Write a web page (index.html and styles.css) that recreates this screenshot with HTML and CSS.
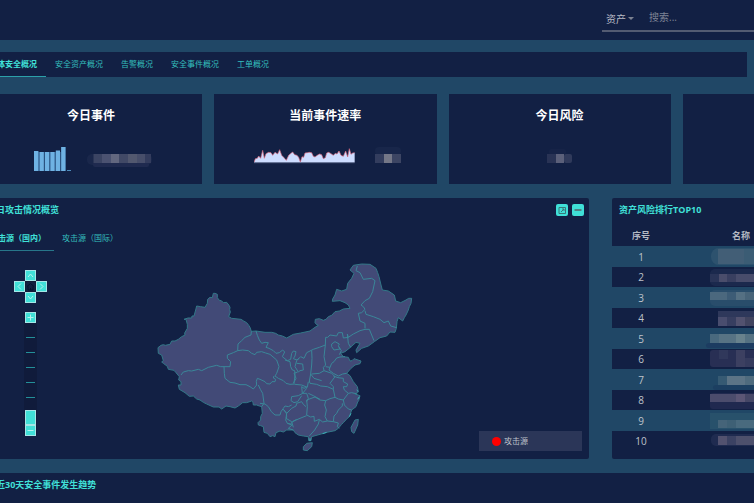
FILE: index.html
```html
<!DOCTYPE html>
<html lang="zh-CN">
<head>
<meta charset="utf-8">
<title>安全概况</title>
<link rel="stylesheet" href="styles.css">
</head>
<body>
<div class="shell">
  <header class="topbar">
    <form class="search">
      <select class="search-type" aria-label="资产"><option>资产</option></select>
      <span class="caret"></span>
      <input class="search-input" type="text" placeholder="搜索..." aria-label="搜索">
    </form>
  </header>

  <main>
    <nav class="tabs main-tabs">
      <a class="tab active" href="#">总体安全概况</a>
      <a class="tab" href="#">安全资产概况</a>
      <a class="tab" href="#">告警概况</a>
      <a class="tab" href="#">安全事件概况</a>
      <a class="tab" href="#">工单概况</a>
    </nav>

    <section class="stats">
      <article class="stat">
        <h2>今日事件</h2>
        <div class="stat-body">
          <svg width="42" height="26" viewBox="-4 0 42 26">
            <g fill="#2a5280"><rect y="6" width="32" height="19"/><rect x="27" y="1" width="5" height="24"/></g>
            <g fill="#6fb2e3"><rect y="5" width="4.400" height="20"/><rect x="5.600" y="6" width="4.200" height="19"/><rect x="11" y="6" width="4.200" height="19"/><rect x="16.400" y="6" width="4.200" height="19"/><rect x="21.800" y="4.500" width="4.200" height="20.500"/><rect x="27.200" y="1" width="4.200" height="24"/></g>
            <rect x="33" y="24" width="4" height="1" fill="#4f8cbc"/>
          </svg>
          <svg class="bars-value" width="66" height="18" viewBox="0 -4 66 18">
            <rect width="65" height="11" rx="5" fill="#1a274b"/><rect x="6" y="8" width="56" height="5" rx="2" fill="#1f2a4f"/>
            <rect x="6.500" width="9" height="9" fill="#3b4463"/><rect x="15" width="9" height="9" fill="#4b5271"/><rect x="24" width="9" height="9" fill="#62677f"/><rect x="32" width="9" height="9" fill="#414966"/><rect x="41" width="9" height="9" fill="#52586f"/><rect x="50" width="8" height="9" fill="#474e6a"/><rect x="58" width="6" height="9" fill="#333c5d"/>
          </svg>
        </div>
      </article>
      <article class="stat">
        <h2>当前事件速率</h2>
        <div class="stat-body rate">
          <svg width="102" height="26" viewBox="150 168 306 78">
            <path fill="#cddcff" d="M150 217L154 206 160 205 164 198 170 205 176 181 181 205 186 191 194 187 201 188 206 196 213 187 221 192 227 179 233 196 239 202 247 211 254 196 261 190 266 186 272 194 279 196 284 202 289 216 294 200 299 202 303 189 310 188 316 187 323 188 328 199 333 201 341 195 347 192 353 194 358 206 364 203 368 189 374 187 381 191 388 196 394 190 399 192 405 183 411 196 418 199 425 183 431 201 436 176 441 193 446 189 452 188V217Z"/>
            <path fill="none" stroke="#d9687c" stroke-width="2" d="M150 217L154 206 160 205 164 198 170 205 176 181 181 205 186 191 194 187 201 188 206 196 213 187 221 192 227 179 233 196 239 202 247 211 254 196 261 190 266 186 272 194 279 196 284 202 289 216 294 200 299 202 303 189 310 188 316 187 323 188 328 199 333 201 341 195 347 192 353 194 358 206 364 203 368 189 374 187 381 191 388 196 394 190 399 192 405 183 411 196 418 199 425 183 431 201 436 176 441 193 446 189 452 188"/>
            <path stroke="#8995b6" stroke-width="2" d="M150 218H452"/>
          </svg>
          <svg class="rate-value" width="26" height="24" viewBox="0 0 26 24">
            <rect width="26" height="8" rx="4" fill="#18264a"/><rect y="7" width="9" height="9" fill="#333d5e"/><rect x="9" y="7" width="8" height="9" fill="#747787"/><rect x="17" y="7" width="9" height="9" fill="#3c4563"/>
          </svg>
        </div>
      </article>
      <article class="stat">
        <h2>今日风险</h2>
        <div class="stat-body">
          <svg width="25" height="20" viewBox="0 0 25 20">
            <rect x="2" width="17" height="6" rx="2" fill="#162347"/><rect y="5" width="9" height="9" fill="#293355"/><rect x="9" y="5" width="8" height="9" fill="#5b607a"/><rect x="17" y="5" width="8" height="9" rx="2" fill="#303a5b"/>
          </svg>
        </div>
      </article>
      <article class="stat"></article>
    </section>

    <section class="panels">
      <article class="panel attack">
        <div class="panel-head">
          <h3>今日攻击情况概览</h3>
          <div class="tools">
            <button type="button" aria-label="放大"><svg width="12" height="12" viewBox="0 0 12 12" fill="none" stroke="#397879"><path d="M3 3.500H9.500V9.500H3Z M5 8L8 5 M6 5H8V7"/></svg></button>
            <button type="button" aria-label="收起"><svg width="12" height="12" viewBox="0 0 12 12"><path d="M2.500 6H9.500" stroke="#546369" stroke-width="1.500"/></svg></button>
          </div>
        </div>
        <nav class="tabs sub-tabs">
          <a class="tab active" href="#">攻击源（国内）</a>
          <a class="tab" href="#">攻击源（国际）</a>
        </nav>
        <div class="map-area">
          <div class="controls">
            <div class="pan">
              <button class="up" type="button" aria-label="上移"><svg viewBox="0 0 9 9"><path d="M2 6L4.500 3 7 6"/></svg></button>
              <button class="left" type="button" aria-label="左移"><svg viewBox="0 0 9 9"><path d="M6 1.500L3 4.500 6 7.500"/></svg></button>
              <button class="home" type="button" aria-label="复位"><svg viewBox="0 0 9 9"><path d="M1 4.500L4.500 1.500 8 4.500M2 4.500V8H7V4.500M4.500 8V6"/></svg></button>
              <button class="right" type="button" aria-label="右移"><svg viewBox="0 0 9 9"><path d="M3 1.500L6 4.500 3 7.500"/></svg></button>
              <button class="down" type="button" aria-label="下移"><svg viewBox="0 0 9 9"><path d="M2 3L4.500 6 7 3"/></svg></button>
            </div>
            <div class="zoom">
              <button type="button" aria-label="放大地图"><svg viewBox="0 0 9 9"><path d="M4.500 1.500V7.500M1.500 4.500H7.500"/></svg></button>
              <input class="zoom-range" type="range" min="0" max="6" value="0" aria-label="缩放">
              <button type="button" aria-label="缩小地图"><svg viewBox="0 0 9 9"><path d="M1.500 4.500H7.500"/></svg></button>
            </div>
          </div>
          <svg class="map" viewBox="0 0 810 627">
            <g fill="#424a77" stroke="#327888" stroke-width="3" stroke-linejoin="round">
              <path d="M195 130L202 133 202 143 208 151 213 152 221 158 230 157 237 166 240 172 239 179 241 186 236 200 245 205 255 206 273 208 281 213 290 218 297 227 300 232 304 244 318 243 345 247 365 247 377 250 385 255 397 258 410 264 430 253 452 249 480 243 488 237 495 232 505 226 500 224 495 218 496 208 508 206 520 211 528 208 535 200 545 196 555 185 568 183 580 177 600 175 595 165 585 158 570 152 547 154 548 147 555 135 560 118 575 123 590 118 593 100 605 85 612 70 600 60 610 46 635 42 660 43 678 55 683 68 687 80 693 105 697 120 715 123 733 135 737 153 752 158 768 150 776 145 785 145 783 160 778 170 775 180 768 195 763 203 758 213 745 203 741 215 739 235 735 247 720 246 710 258 690 263 673 275 655 288 635 295 620 308 618 300 630 280 618 277 600 293 585 305 572 310 580 320 595 322 600 333 606 332 612 326 633 333 630 341 615 345 603 355 590 370 600 377 610 395 622 410 625 425 615 432 630 437 626 452 623 456 618 470 605 480 598 500 591 506 580 518 574 524 565 535 555 542 530 547 510 553 485 560 483 572 476 572 475 560 460 558 445 555 435 548 430 540 410 540 400 546 390 543 378 548 375 560 368 557 360 560 352 550 342 547 340 530 332 527 325 525 324 518 332 510 332 500 337 490 335 470 328 468 320 465 310 465 309 457 305 453 290 458 278 458 265 468 255 474 240 470 228 468 215 477 207 471 190 471 170 462 160 457 150 450 140 447 130 438 118 439 105 428 88 418 85 405 93 405 93 395 86 390 88 380 78 368 72 361 55 358 52 349 40 340 35 336 40 332 35 315 25 310 24 293 33 286 40 284 46 286 60 283 65 273 75 273 85 268 95 260 105 255 104 249 112 235 112 223 108 208 102 208 114 204 125 204 126 198 132 198 137 180 140 168 152 170 165 172 172 160 173 148 180 142 187 143 190 130Z"/>
              <path d="M605 545L603 532 607 525 615 510 625 508 623 525 612 550ZM460 590L470 580 487 578 485 590 472 602 460 600Z"/>
            </g>
            <g fill="none" stroke="#3a8799" stroke-width="3" stroke-linejoin="round">
              <path d="M93 375L100 366 115 362 125 363 145 358 155 362 175 352 200 346 212 350 225 350 240 350 242 335 232 325 232 315 250 308 263 302M263 302L264 282 275 272 285 262 303 255 304 244M263 302L278 300 295 302 305 310 315 314 320 307 335 305 347 309 360 313 380 330 387 350 380 370 375 378 385 385M318 243L322 256 328 270 335 280 345 277 355 278 348 292 357 295 370 302 378 310 388 308 398 300 404 306 397 320 412 332 422 328 425 310 430 303 438 305 435 318 430 326 441 330 447 325M222 350L223 370 225 385 240 397 255 399 270 404 288 404 300 410 310 417 320 405 319 394 322 385 330 388 345 395 350 401 360 402 366 395 375 395 377 388 370 384 372 378M325 405L331 418 338 430 342 460 335 470M385 385L400 392 408 400 420 403 435 402M405 330L420 335 422 350 427 360 434 362 435 376 432 400M330 460L345 462 355 470 364 485 375 495 390 495 393 485 400 475 405 468 415 470 425 465M400 478L409 489 410 500 407 510 412 520 422 522 428 515 440 508M412 520L426 525 415 535 430 540"/>
              <g transform="translate(390)">
                <path d="M232 48L228 62 240 68 250 88 275 85 285 92 278 125 268 145 255 152 243 165 250 170 255 178 245 188 235 190 240 213 255 220 255 235M255 182L258 193 280 200 300 208 312 218 325 213 332 228 350 233M255 238L268 238 275 255 282 272M255 238L240 242 220 252 205 262 202 252 205 280 212 292M205 262L190 264 187 248 175 248 170 258 150 255 143 262 137 262 136 285 118 292 100 298 80 308 72 325 62 320 50 332M95 302L96 325 95 345 92 372M136 285L132 320 137 345 130 352 132 362 118 370 95 372M50 332L45 350 55 366 60 362 70 360 68 342 50 340M155 282L165 275 178 282 175 287 180 297 162 300 155 290ZM176 290L184 302 178 314M195 320L180 321 170 324 162 335 155 340 150 352 137 350M150 352L147 360 160 370 175 378 188 372 200 370M132 362L155 370 165 380 150 400 160 410 160 418 142 410 122 408 110 403 90 400 88 393 92 372M92 372L102 385 125 392M160 378L174 383 190 385 190 395 203 402 200 410 190 410 193 420 205 430 190 450 175 447 165 442 160 418M205 430L215 428 232 432M190 450L193 465 205 477 215 480M137 452L150 446 165 442M187 460L187 468 175 480 170 490 162 498 160 515 142 513 135 500 139 480 134 465 137 452M80 450L105 441 120 450 137 452M80 450L82 470 80 495 92 501 102 499 103 514 118 508 128 516 142 513M118 510L115 522 104 540 88 558M160 515L175 519 172 530 178 535M37 515L60 505 80 497M10 478L20 490 35 475 48 468 50 460 65 455 70 463 78 470M20 490L18 505 35 515 40 532M85 395L82 411 72 415 65 410 67 430 80 430 85 445 80 455M80 415L68 430 55 437 35 440 33 452 42 458 53 455 65 437M45 403L65 405 82 412M85 430L100 437 120 448M40 400L48 385 42 370 53 366"/>
              </g>
              <path d="M620 420l5 5M628 440l-5 8M603 490l-5 10M530 547l-12 4M480 565v8" stroke="#3daeb8"/>
            </g>
          </svg>
          <div class="legend"><span class="dot"></span>攻击源</div>
        </div>
      </article>

      <article class="panel ranking">
        <div class="panel-head"><h3>资产风险排行TOP10</h3></div>
        <table>
          <thead><tr><th class="rank">序号</th><th class="name">名称</th></tr></thead>
          <tbody>
            <tr><td>1</td><td><svg class="mosaic" viewBox="0 0 60 20"><rect x="7" y="1" width="60" height="17" rx="8" fill="#2d526e"/><rect x="14" y="2" width="26" height="15" fill="#425e76"/><rect x="40" y="2" width="20" height="15" fill="#3b5c74"/></svg></td></tr>
            <tr><td>2</td><td><svg class="mosaic" viewBox="0 0 60 20"><rect x="6" y="2" width="60" height="17" rx="5" fill="#1b294d"/><rect x="6" y="7" width="9" height="8" fill="#293457"/><rect x="15" y="7" width="8" height="8" fill="#4a4d6b"/><rect x="23" y="7" width="9" height="8" fill="#393f60"/><rect x="32" y="7" width="18" height="8" fill="#484c6b"/></svg></td></tr>
            <tr><td>3</td><td><svg class="mosaic" viewBox="0 0 60 20"><rect x="6" y="2" width="60" height="16" rx="5" fill="#294d6b"/><rect x="6" y="4" width="17" height="8" fill="#4b687e"/><rect x="23" y="4" width="9" height="8" fill="#3d5c76"/><rect x="32" y="4" width="9" height="8" fill="#557083"/><rect x="41" y="4" width="9" height="8" fill="#486479"/></svg></td></tr>
            <tr><td>4</td><td><svg class="mosaic" viewBox="0 0 60 20"><rect x="14" y="3" width="60" height="15" fill="#2e385b"/><rect x="14" y="9" width="9" height="9" fill="#494d6e"/><rect x="23" y="9" width="9" height="9" fill="#373e60"/><rect x="32" y="9" width="9" height="9" fill="#52526f"/><rect x="41" y="9" width="9" height="9" fill="#41445f"/></svg></td></tr>
            <tr><td>5</td><td><svg class="mosaic" viewBox="0 0 60 20"><rect x="2" y="14" width="60" height="5" rx="3" fill="#1c3c61"/><rect x="6" y="5" width="9" height="9" fill="#49697e"/><rect x="15" y="5" width="17" height="9" fill="#577384"/><rect x="32" y="5" width="9" height="9" fill="#68828d"/><rect x="41" y="5" width="9" height="9" fill="#557283"/></svg></td></tr>
            <tr><td>6</td><td><svg class="mosaic" viewBox="0 0 60 20"><rect x="6" y="1" width="60" height="17" rx="3" fill="#282f54"/><rect x="15" y="1" width="9" height="9" fill="#30385b"/><rect x="32" y="1" width="9" height="17" fill="#3c4061"/><rect x="41" y="9" width="9" height="9" fill="#353b5d"/></svg></td></tr>
            <tr><td>7</td><td><svg class="mosaic" viewBox="0 0 60 20"><rect x="9" y="15" width="60" height="5" rx="3" fill="#1c3f61"/><rect x="14" y="6" width="9" height="9" fill="#365a73"/><rect x="23" y="6" width="18" height="9" fill="#5c7486"/><rect x="41" y="6" width="9" height="9" fill="#4f6b7e"/></svg></td></tr>
            <tr><td>8</td><td><svg class="mosaic" viewBox="0 0 60 20"><rect x="6" y="3" width="60" height="16" rx="3" fill="#20294f"/><rect x="6" y="4" width="26" height="8" fill="#4b4c6c"/><rect x="32" y="4" width="9" height="8" fill="#5b5675"/><rect x="41" y="4" width="9" height="8" fill="#454766"/></svg></td></tr>
            <tr><td>9</td><td><svg class="mosaic" viewBox="0 0 60 20"><rect x="6" y="2" width="60" height="16" fill="#28516b"/><rect x="14" y="9" width="9" height="8" fill="#456479"/><rect x="23" y="9" width="9" height="8" fill="#3e6075"/><rect x="32" y="9" width="18" height="8" fill="#496a7e"/></svg></td></tr>
            <tr><td>10</td><td><svg class="mosaic" viewBox="0 0 60 20"><rect x="7" y="3" width="60" height="12" rx="5" fill="#1f2b50"/><rect x="14" y="5" width="9" height="9" fill="#52526f"/><rect x="23" y="5" width="9" height="9" fill="#3b4263"/><rect x="32" y="5" width="18" height="9" fill="#4d506c"/></svg></td></tr>
          </tbody>
        </table>
      </article>
    </section>

    <section class="panel trend"><div class="panel-head"><h3>最近30天安全事件发生趋势</h3></div></section>
  </main>
</div>
</body>
</html>
```
FILE: styles.css
```css
* { box-sizing: border-box; }
:root {
  --navy: #122044;
  --page: #204766;
  --teal: #40e0d8;
}
html { background: var(--page); }
body {
  margin: 0;
  min-height: 100vh;
  overflow: hidden;
  color: #bfc3cb;
  font: 8px/12px "Open Sans", "Noto Sans CJK SC", sans-serif;
}
h2, h3 { margin: 0; }
button { padding: 0; border: 0; cursor: pointer; }

/* The dashboard is wider than the window and scrolled slightly to the right. */
.shell { width: calc(100% + 171px); margin-left: -20px; }

.topbar {
  display: flex;
  justify-content: flex-end;
  height: 40px;
  background: var(--navy);
}
.search {
  display: flex;
  align-items: center;
  width: 303px;
  height: 32px;
  padding: 4px 4px 0;
  border-bottom: 2px solid #535b72;
}
.search-type, .search-input {
  margin: 0;
  padding: 0;
  border: 0;
  outline: 0;
  background: transparent;
  font: 10px/16px "Open Sans", "Noto Sans CJK SC", sans-serif;
}
.search-type { width: 22px; height: 18px; appearance: none; color: #b8bbc4; margin-top: 3px; }
.caret { border: 3px solid transparent; border-top-color: #7c8291; border-bottom: 0; margin-top: 3px; }
.search-input { flex: 1; margin-left: 15px; color: #b8bbc4; }
.search-input::placeholder { color: #7d8394; opacity: 1; }

.tabs { display: flex; }
.tab { color: #34bfbd; text-decoration: none; white-space: nowrap; border-bottom: 1px solid transparent; }
.tab.active { color: var(--teal); font-weight: 700; }

.main-tabs { height: 25px; margin: 12px 158px 17px 0; background: var(--navy); }
.main-tabs .tab { padding: 0 9px; line-height: 24px; }
.main-tabs .active { border-color: #2ca1aa; }

.stats { display: grid; grid-template-columns: repeat(4, 1fr); gap: 12px; }
.stat { height: 90px; padding-top: 13px; background: var(--navy); text-align: center; }
.stat h2 { color: #fff; font-size: 12px; line-height: 18px; }
.stat-body { display: flex; align-items: center; justify-content: center; height: 28px; margin-top: 20px; }
.rate { padding-left: 5px; }
.bars-value { margin-left: 15px; }
.rate-value { margin-left: 19px; }

.panels { display: grid; grid-template-columns: 609fr 293fr; gap: 23px; margin: 14px 0; }
.panel { background: var(--navy); border-radius: 2px; }
.panel-head { display: flex; align-items: center; justify-content: space-between; height: 24px; padding: 0 5px 0 7px; }
.panel-head h3 { color: var(--teal); font-size: 9px; line-height: 14px; }
.tools { display: flex; gap: 4px; }
.tools button { width: 12px; height: 12px; border-radius: 2px; background: var(--teal); }
.tools svg { display: block; }

.sub-tabs { height: 29px; padding-left: 2px; }
.sub-tabs .tab { padding: 4px 8px 0; line-height: 24px; }
.sub-tabs .active { border-color: #27768a; }

.map-area { display: flex; height: 208px; padding: 0 7px 8px 34px; }
.controls { display: flex; flex-direction: column; align-items: center; width: 33px; padding-top: 19px; flex: none; }
.pan { display: grid; grid-template: repeat(3, 11px) / repeat(3, 11px); grid-template-areas: ". up ." "left home right" ". down ."; }
.pan button, .zoom button {
  display: block;
  width: 11px;
  height: 11px;
  border: 1px solid #a5e7e7;
  background: var(--teal);
}
.pan .up { grid-area: up; }
.pan .left { grid-area: left; }
.pan .right { grid-area: right; }
.pan .down { grid-area: down; }
.pan .home { grid-area: home; background: #112040; border-color: #101b36; }
.controls svg { display: block; width: 9px; height: 9px; fill: none; stroke: #b4f5ef; }
.controls .home svg { stroke: #06102b; }
.zoom { display: flex; flex-direction: column; align-items: center; margin-top: 9px; width: 13px; background: #101b3b; }
.zoom-range {
  appearance: none;
  writing-mode: vertical-lr;
  direction: rtl;
  width: 11px;
  height: 102px;
  margin: 0;
  background: linear-gradient(transparent 14px, #238f99 14px) 1px 0 / 9px 15px repeat-y;
}
.zoom-range::-webkit-slider-thumb {
  appearance: none;
  width: 11px;
  height: 15px;
  border: 1px solid #a5e7e7;
  background: var(--teal);
}
.map { flex: none; width: 270px; height: 209px; margin-left: 103px; margin-top: -1px; }
.legend {
  display: flex;
  align-items: center;
  align-self: flex-end;
  width: 103px;
  height: 20px;
  margin-left: auto;
  padding-left: 13px;
  background: #2b3658;
}
.dot { width: 9px; height: 9px; margin-right: 3px; border-radius: 50%; background: #f00; }

table { width: 100%; table-layout: fixed; border-collapse: collapse; text-align: center; }
th, td { padding: 0; }
th { height: 24px; padding-top: 4px; font-size: 9px; font-weight: 700; color: #b4b9c3; }
th.rank { width: 58px; }
th.name { padding-right: 93px; }
td { height: 20px; font-size: 10px; line-height: 20px; }
tbody tr:nth-child(odd) { background: var(--page); }
tbody tr:nth-child(odd) td { height: 21px; }
.mosaic { display: block; width: 60px; height: 20px; margin-left: 34px; }

.trend { min-height: 30px; }
```
